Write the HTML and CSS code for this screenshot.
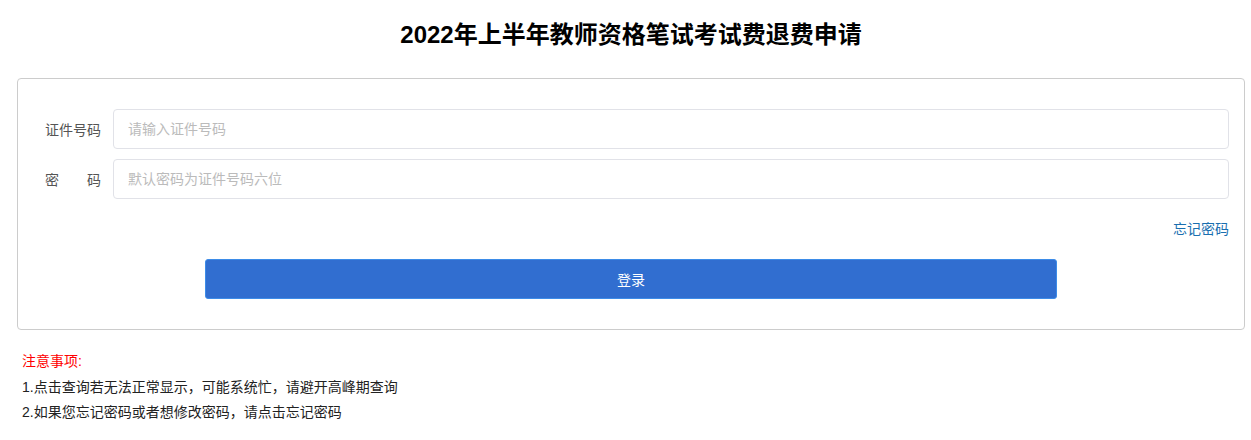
FILE: index.html
```html
<!DOCTYPE html>
<html lang="zh-CN">
<head>
    <meta charset="UTF-8">
    <meta name="viewport" content="width=device-width, initial-scale=1.0">
    <title>2022年上半年教师资格笔试考试费退费申请</title>
    <link rel="stylesheet" href="styles.css">
</head>
<body>
    <div class="wrap">
        <h1 class="title">2022年上半年教师资格笔试考试费退费申请</h1>
        <form class="login-box" onsubmit="return false;">
            <div class="form-row">
                <label class="form-label" for="zjhm">证件号码</label>
                <input class="form-input" type="text" id="zjhm" placeholder="请输入证件号码">
            </div>
            <div class="form-row">
                <label class="form-label" for="mm">密&emsp;&emsp;码</label>
                <input class="form-input" type="password" id="mm" placeholder="默认密码为证件号码六位">
            </div>
            <div class="forget-row">
                <a class="forget-link" href="#">忘记密码</a>
            </div>
            <button class="login-btn" type="submit">登录</button>
        </form>
        <div class="notes">
            <p class="notes-title">注意事项:</p>
            <p>1.点击查询若无法正常显示，可能系统忙，请避开高峰期查询</p>
            <p>2.如果您忘记密码或者想修改密码，请点击忘记密码</p>
        </div>
    </div>
</body>
</html>
```

FILE: styles.css
```css
body {
    margin: 0;
    padding: 0;
    font-family: "Liberation Sans", Arial, "Noto Sans CJK SC", sans-serif;
    font-size: 14px;
    color: #333;
    background: #fff;
}

.wrap {
    padding: 0 6px 0 17px;
}

.title {
    margin: 20px 0 28px;
    font-size: 24px;
    line-height: 30px;
    font-weight: bold;
    color: #000;
    text-align: center;
}

.login-box {
    border: 1px solid #ccc;
    border-radius: 4px;
    padding: 30px 0;
}

.form-row {
    display: flex;
    align-items: center;
    height: 40px;
    margin-bottom: 10px;
    padding-right: 15px;
}

.form-label {
    width: 83px;
    padding-right: 12px;
    text-align: right;
    color: #555;
    flex-shrink: 0;
}

.form-input {
    flex: 1;
    height: 40px;
    box-sizing: border-box;
    padding: 0 14px;
    border: 1px solid #e1e2e8;
    border-radius: 4px;
    font-family: inherit;
    font-size: 14px;
    color: #333;
    outline: none;
}

.form-input::placeholder {
    color: #bbb;
}

.forget-row {
    text-align: right;
    line-height: 20px;
    margin-top: 20px;
    padding-right: 15px;
}

.forget-link {
    color: #1a6fb0;
    text-decoration: none;
}

.login-btn {
    display: block;
    width: 852px;
    height: 40px;
    margin: 20px auto 0;
    background-color: #316ed0;
    border: 1px solid #3d8ce8;
    border-radius: 3px;
    color: #fff;
    font-family: inherit;
    font-size: 14px;
    cursor: pointer;
}

.notes {
    margin-top: 19px;
    padding-left: 5px;
}

.notes p {
    margin: 0;
    line-height: 25.5px;
    color: #222;
}

.notes .notes-title {
    color: #f00;
}
```
